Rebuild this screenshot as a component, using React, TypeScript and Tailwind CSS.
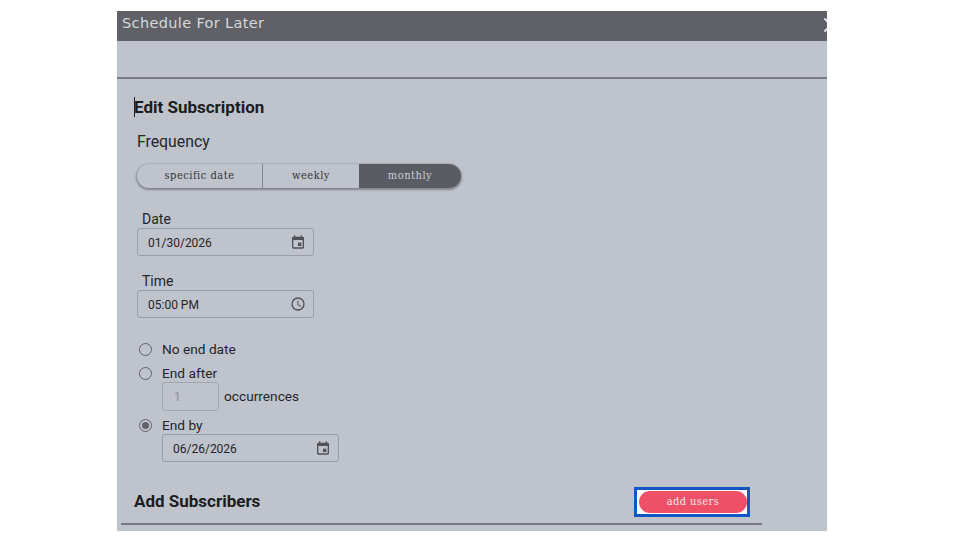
import React from 'react';
import { X } from 'lucide-react';

const CalendarIcon = () => (
  <svg width="16" height="16" viewBox="0 0 24 24" fill="#4f5257">
    <path d="M19 4h-1V2h-2v2H8V2H6v2H5a2 2 0 0 0-2 2v14a2 2 0 0 0 2 2h14a2 2 0 0 0 2-2V6a2 2 0 0 0-2-2zm0 16H5V9h14v11z" />
    <rect x="12" y="13" width="5" height="5" />
  </svg>
);

const ClockIcon = () => (
  <svg width="16" height="16" viewBox="0 0 24 24" fill="#4f5257">
    <path d="M12 2a10 10 0 1 0 0 20 10 10 0 0 0 0-20zm0 18a8 8 0 1 1 0-16 8 8 0 0 1 0 16z" />
    <path d="M12.5 7H11v6l5.2 3.2.8-1.3-4.5-2.7V7z" />
  </svg>
);

const Radio = ({ checked }: { checked?: boolean }) => (
  <span className="flex h-[13px] w-[13px] shrink-0 items-center justify-center rounded-full border-[1.5px] border-[#5f6269]">
    {checked && <span className="h-[7px] w-[7px] rounded-full bg-[#5f6269]" />}
  </span>
);

const FieldBox = ({ value, icon }: { value: string; icon: React.ReactNode }) => (
  <div className="flex h-[28px] w-[177px] items-center justify-between rounded-[3px] border border-[#9a9da6] pl-[10px] pr-[7px] text-[12px] text-[#24262b]">
    <span className="pt-px">{value}</span>
    {icon}
  </div>
);

export default function App() {
  return (
    <div className="h-[540px] w-[960px] overflow-hidden bg-white pl-[117px] pt-[11px] font-['Roboto',sans-serif]">
      <div className="h-[520px] w-[710px] overflow-hidden bg-[#bfc3cc]">
        <div className="flex h-[30px] items-center justify-between overflow-hidden bg-[#5f6166] pl-[5px]">
          <span className="pb-[4px] font-['DejaVu_Sans',sans-serif] text-[14.5px] tracking-[0.35px] text-[#d6d8dc]">
            Schedule For Later
          </span>
          <X className="-mr-[16px] mt-[-2px] h-[24px] w-[24px] shrink-0 text-[#dfe1e5]" />
        </div>

        <div className="h-[38px] border-b-2 border-[#777a80]" />

        <div className="relative pl-[17px] pt-[17px]">
          <span className="absolute left-[17px] top-[18px] h-[20px] w-px bg-[#1c1d21]" />
          <h2 className="text-[17px] leading-[22px] font-bold text-[#1c1d21]">Edit Subscription</h2>

          <div className="mt-[14px] pl-[3px] text-[15.8px] leading-[20px] text-[#24262b]">Frequency</div>

          <div className="mt-[12px] ml-[3px] flex h-[24px] w-[324px] overflow-hidden rounded-full font-['DejaVu_Serif_Condensed',serif] text-[11px] tracking-[0.5px] text-[#33353a] shadow-[0_1px_2px_1px_#83868e]">
            <div className="flex w-[126px] items-center justify-center border-r border-[#83868e]">specific date</div>
            <div className="flex w-[96px] items-center justify-center">weekly</div>
            <div className="flex flex-1 items-center justify-center bg-[#5a5c63] text-[#c9cbd3]">monthly</div>
          </div>

          <div className="mt-[23px] pl-[3px]">
            <div className="pl-[5px] text-[14px] leading-[17px] text-[#24262b]">Date</div>
            <FieldBox value="01/30/2026" icon={<CalendarIcon />} />
            <div className="mt-[17px] pl-[5px] text-[14px] leading-[17px] text-[#24262b]">Time</div>
            <FieldBox value="05:00 PM" icon={<ClockIcon />} />
          </div>

          <div className="mt-[22px] pl-[5px] text-[13.7px] leading-[18px] text-[#24262b]">
            <div className="flex items-center gap-[10px]">
              <Radio />
              <span>No end date</span>
            </div>
            <div className="mt-[6px] flex items-center gap-[10px]">
              <Radio />
              <span>End after</span>
            </div>
            <div className="ml-[23px] flex items-center gap-[5px]">
              <div className="flex h-[29px] w-[57px] items-center rounded-[3px] border border-[#a3a6af] pl-[11px] text-[12px] text-[#8b8e96]">
                1
              </div>
              <span className="pb-[2px]">occurrences</span>
            </div>
            <div className="mt-[5px] flex items-center gap-[10px]">
              <Radio checked />
              <span>End by</span>
            </div>
            <div className="ml-[23px]">
              <FieldBox value="06/26/2026" icon={<CalendarIcon />} />
            </div>
          </div>

          <div className="mt-[25px] flex h-[30px] w-[616px] items-center justify-between">
            <h2 className="text-[17px] font-bold text-[#1c1d21]">Add Subscribers</h2>
            <div className="flex h-[30px] w-[116px] items-center justify-end border-[3px] border-[#0f57c4] bg-white">
              <button className="flex h-[22px] w-[108px] items-center justify-center rounded-full bg-[#ee5068] font-['DejaVu_Serif_Condensed',serif] text-[11px] tracking-[0.4px] text-[#f5e6e9]">
                add users
              </button>
            </div>
          </div>
          <div className="mt-[6px] -ml-[13px] h-[2px] w-[641px] bg-[#777a80]" />
        </div>
      </div>
    </div>
  );
}
